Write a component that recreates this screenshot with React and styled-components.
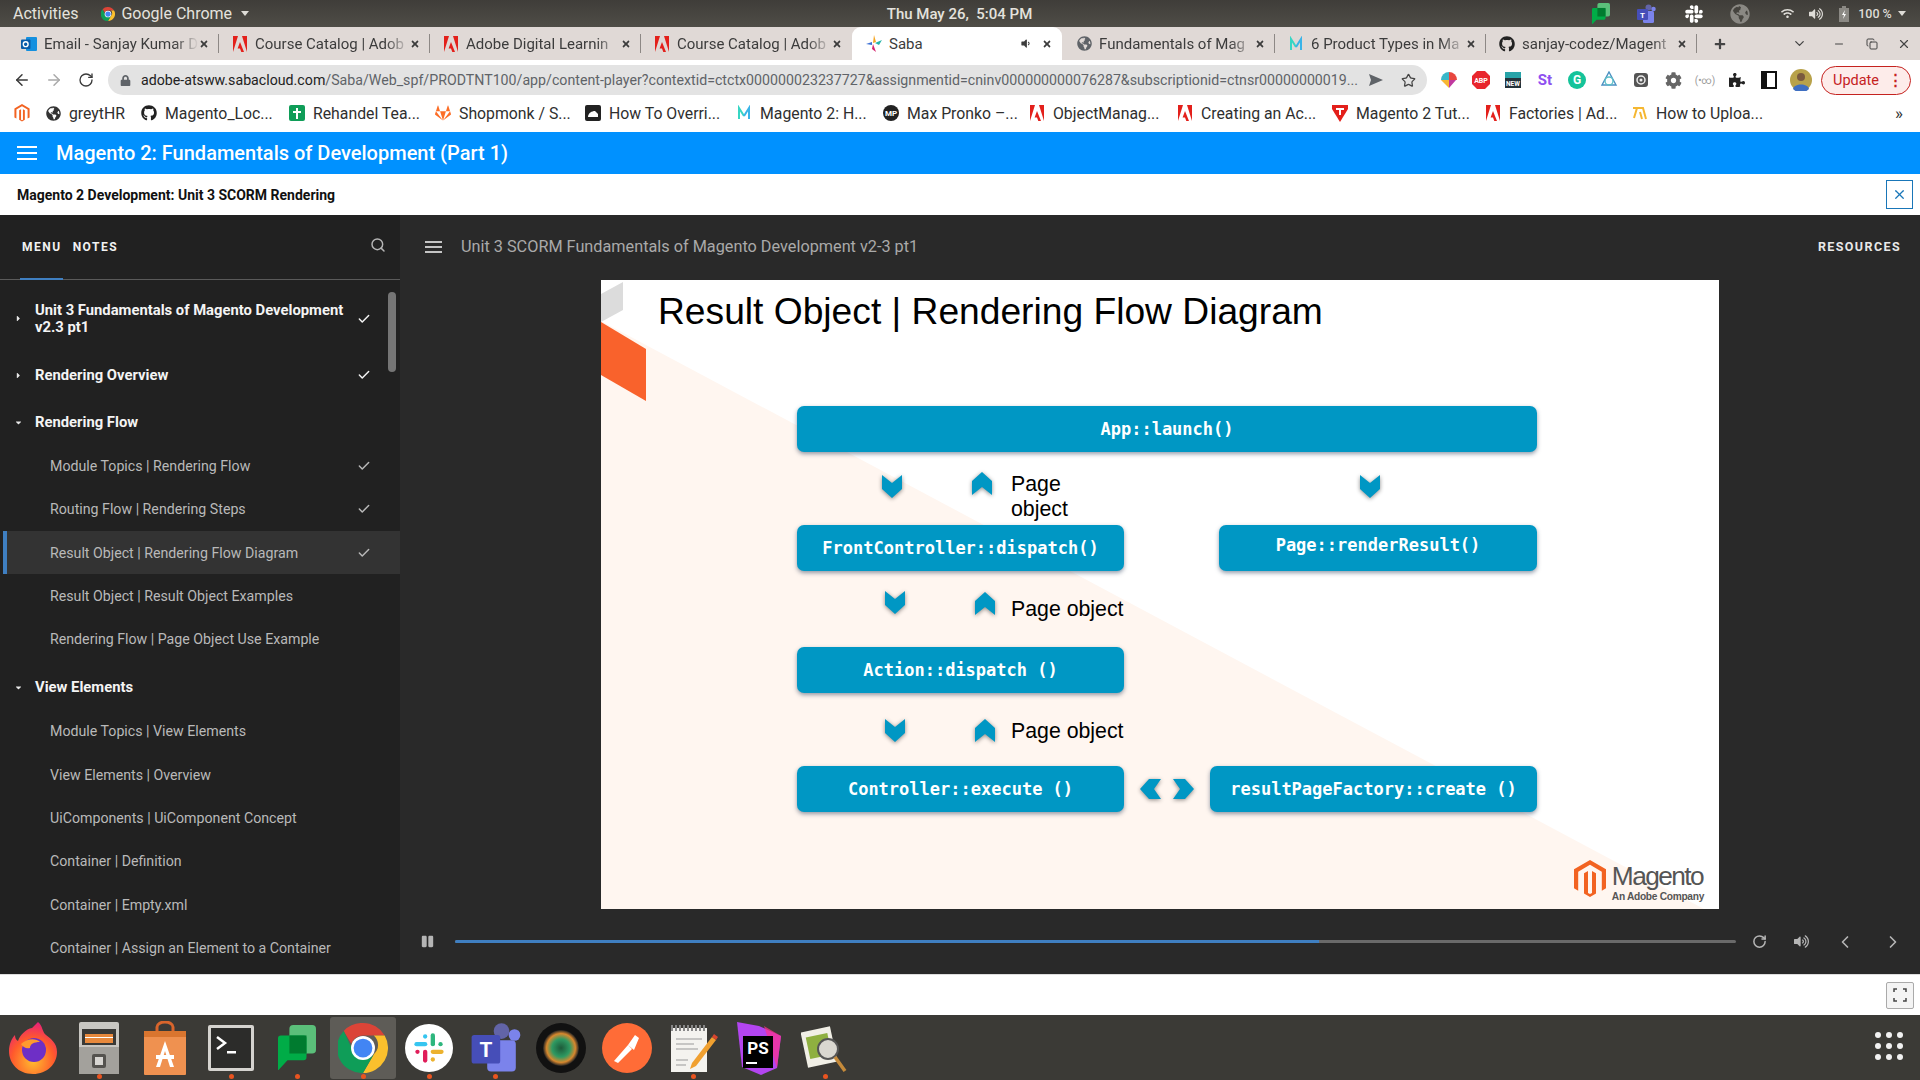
import React from "react";
import styled, { createGlobalStyle } from "styled-components";
import { FaGithub, FaGitlab, FaSlack, FaGlobeAmericas, FaWifi, FaVolumeUp, FaPuzzlePiece, FaPause, FaCog, FaLock, FaCaretRight, FaCaretDown, FaPlus, FaTimes, FaVolumeDown } from "react-icons/fa";
import { ArrowLeft, ArrowRight, RotateCw, Star, Search, Check, ChevronLeft, ChevronRight, ChevronDown, Minus, Copy, X } from "lucide-react";

const Global = createGlobalStyle`
    * { box-sizing: border-box; }
    html, body { margin: 0; padding: 0; background: #fff; }
    body { font-family: Roboto, "Noto Sans", sans-serif; }
    #root { width: 1920px; height: 1080px; overflow: hidden; }
`

const Screen = styled.div`
    width: 1920px;
    height: 1080px;
    display: flex;
    flex-direction: column;
    overflow: hidden;
`

/* ubuntu top bar */
const TopBar = styled.div`
    height: 27px;
    flex: none;
    display: grid;
    grid-template-columns: 1fr auto 1fr;
    align-items: center;
    padding: 0 14px 0 13px;
    background: linear-gradient(#3f3d39, #4f4d47);
    color: #e4e2dd;
    font-size: 15px;
    font-weight: 500;
`
const TopLeft = styled.div`
    display: flex;
    align-items: center;
    gap: 6px;
    font-size: 16px;
    font-weight: 400;
    span:first-child { margin-right: 17px; }
`
const TopRight = styled.div`
    display: flex;
    align-items: center;
    justify-content: flex-end;
    font-size: 12.5px;
`
const TraySlot = styled.div`
    width: ${p => p.$w || 30}px;
    margin-left: ${p => p.$ml || 0}px;
    flex: none;
    display: flex;
    justify-content: center;
    align-items: center;
    color: #dedcd7;
`
const Caret = styled.i`
    display: inline-block;
    width: 0;
    height: 0;
    margin-left: 3px;
    border-left: 4px solid transparent;
    border-right: 4px solid transparent;
    border-top: 5px solid #dedcd7;
`

/* chrome tabs */
const TabStrip = styled.div`
    height: 33px;
    flex: none;
    display: flex;
    align-items: flex-end;
    padding-left: 8px;
    background: #e0d9d6;
    color: #3c3c3c;
`
const Tab = styled.div`
    width: ${p => p.$w || 211}px;
    height: 33px;
    flex: none;
    display: flex;
    align-items: center;
    padding: 0 10px 0 13px;
    font-size: 15px;
    background: ${p => p.$active ? "#fff" : "transparent"};
    border-radius: ${p => p.$active ? "9px 9px 0 0" : "0"};
    position: relative;
    &::after {
        content: "";
        display: ${p => p.$sep ? "block" : "none"};
        position: absolute;
        right: 0;
        top: 7px;
        height: 19px;
        width: 1px;
        background: #8d8885;
    }
`
const TabTitle = styled.div`
    flex: 1;
    min-width: 0;
    margin-left: 7px;
    white-space: nowrap;
    mask-image: ${p => p.$active ? "none" : "linear-gradient(to right, #000 84%, transparent 100%)"};
`
const StripTools = styled.div`
    display: flex;
    align-items: center;
    height: 33px;
    color: #444;
`
const StripSlot = styled.div`
    width: ${p => p.$w}px;
    display: flex;
    justify-content: center;
    align-items: center;
`

/* chrome toolbar */
const ToolBar = styled.div`
    height: 40px;
    flex: none;
    display: flex;
    align-items: center;
    background: #fff;
    padding-left: 6px;
`
const NavBtn = styled.div`
    width: 32px;
    display: flex;
    justify-content: center;
    color: ${p => p.$off ? "#a9a9a9" : "#3a3a3a"};
`
const Address = styled.div`
    width: 1319px;
    height: 30px;
    margin-left: 6px;
    flex: none;
    display: flex;
    align-items: center;
    padding: 0 11px 0 12px;
    border-radius: 15px;
    background: #e3e3e3;
    color: #5f6368;
    font-size: 14.2px;
`
const Url = styled.div`
    flex: 1;
    min-width: 0;
    margin-left: 10px;
    white-space: nowrap;
    overflow: hidden;
    b { font-weight: 400; color: #222; }
`
const ExtList = styled.div`
    display: flex;
    align-items: center;
    margin-left: 6px;
`
const ExtSlot = styled.div`
    width: 32px;
    display: flex;
    justify-content: center;
    align-items: center;
`
const UpdatePill = styled.div`
    width: 90px;
    height: 29px;
    margin-left: 4px;
    display: flex;
    align-items: center;
    justify-content: space-between;
    padding: 0 7px 0 11px;
    border: 1px solid #c5221f;
    border-radius: 15px;
    background: #fdecea;
    color: #c5221f;
    font-size: 14.5px;
`

/* bookmarks */
const BookmarkBar = styled.div`
    height: 32px;
    flex: none;
    display: flex;
    align-items: center;
    padding: 0 0 6px 14px;
    background: #fff;
    color: #2f2f2f;
    font-size: 15.8px;
`
const Bookmark = styled.div`
    width: ${p => p.$w}px;
    flex: none;
    display: flex;
    align-items: center;
    gap: 8px;
    white-space: nowrap;
`
const More = styled.div`
    margin-left: auto;
    margin-right: 17px;
    font-size: 17px;
`

/* course header */
const BlueBar = styled.div`
    height: 42px;
    flex: none;
    display: flex;
    align-items: center;
    gap: 19px;
    padding-left: 17px;
    background: #0091ff;
    color: #fff;
    font-size: 20px;
    font-weight: 500;
`
const Burger = styled.div`
    display: flex;
    flex-direction: column;
    gap: ${p => p.$gap || 4}px;
    width: ${p => p.$w || 20}px;
    i {
        display: block;
        height: 2px;
        background: ${p => p.$c || "#fff"};
    }
`
const SubBar = styled.div`
    height: 41px;
    flex: none;
    display: flex;
    align-items: center;
    justify-content: space-between;
    padding: 0 7px 0 17px;
    background: #fff;
    color: #111;
    font-size: 14px;
    font-weight: 700;
`
const CloseBox = styled.div`
    width: 27px;
    height: 29px;
    display: flex;
    align-items: center;
    justify-content: center;
    border: 1px solid #1976b8;
    color: #1976b8;
`

/* player */
const Player = styled.div`
    height: 759px;
    flex: none;
    display: flex;
`
const Sidebar = styled.aside`
    width: 400px;
    flex: none;
    background: #212121;
    position: relative;
    overflow: hidden;
`
const SideHead = styled.div`
    height: 65px;
    display: flex;
    align-items: center;
    padding: 0 14px 1px 22px;
    border-bottom: 1px solid #5a5a5a;
    position: relative;
`
const SideTab = styled.div`
    margin-right: 11px;
    color: #f2f2f2;
    font-size: 12px;
    font-weight: 700;
    letter-spacing: 1.5px;
`
const TabLine = styled.div`
    position: absolute;
    left: 20px;
    bottom: -1px;
    width: 43px;
    height: 2px;
    background: #3f7fc1;
`
const SideSearch = styled.div`
    margin-left: auto;
    margin-bottom: 3px;
    color: #b5b5b5;
    display: flex;
`
const Thumb = styled.div`
    position: absolute;
    left: 388px;
    top: 77px;
    width: 8px;
    height: 80px;
    border-radius: 4px;
    background: #757575;
`
const TreeList = styled.div`
    padding-top: 17px;
`
const Section = styled.div`
    min-height: 43.4px;
    margin-top: ${p => p.$mt || 0}px;
    display: flex;
    align-items: center;
    padding-right: 29px;
    color: #f4f4f4;
    font-size: 14.8px;
    font-weight: 700;
    line-height: 17px;
`
const Twist = styled.div`
    width: 35px;
    padding-left: 14px;
    flex: none;
    display: flex;
    color: #e8e8e8;
`
const SectionName = styled.div`
    flex: 1;
    padding-right: 12px;
`
const Topic = styled.div`
    height: 43.4px;
    margin-left: 3px;
    display: flex;
    align-items: center;
    padding-right: 29px;
    padding-left: ${p => p.$active ? "43px" : "47px"};
    color: #b9b9b9;
    font-size: 14.2px;
    background: ${p => p.$active ? "#333333" : "transparent"};
    border-left: ${p => p.$active ? "4px solid #3f7fc1" : "0"};
`
const TopicName = styled.div`
    flex: 1;
`
const Stage = styled.main`
    flex: 1;
    min-width: 0;
    background: #292929;
    display: flex;
    flex-direction: column;
`
const StageHead = styled.div`
    height: 65px;
    flex: none;
    display: flex;
    align-items: center;
    gap: 19px;
    padding: 0 19px 2px 25px;
    color: #aaaaaa;
    font-size: 16.25px;
`
const Resources = styled.div`
    margin-left: auto;
    color: #e8e8e8;
    font-size: 12.5px;
    font-weight: 700;
    letter-spacing: 1.4px;
`
const Controls = styled.div`
    height: 65px;
    flex: none;
    display: flex;
    align-items: center;
    padding: 0 0 0 21px;
    color: #b5b5b5;
`
const Track = styled.div`
    width: 1281px;
    height: 3px;
    margin-left: 21px;
    border-radius: 2px;
    background: #6a6a6a;
    overflow: hidden;
`
const TrackFill = styled.div`
    height: 100%;
    background: #3f7fc1;
`
const CtlSlot = styled.div`
    width: ${p => p.$w}px;
    display: flex;
    justify-content: center;
`

/* the slide */
const Slide = styled.div`
    width: 1118px;
    height: 629px;
    margin-left: 201px;
    flex: none;
    background: #fff;
    position: relative;
    overflow: hidden;
`
const Peach = styled.div`
    position: absolute;
    inset: 0;
    background: #fff6f0;
    clip-path: polygon(0 41px, 1103px 629px, 0 629px);
`
const Corner = styled.svg`
    position: absolute;
    left: 0;
    top: 0;
`
const SlideBody = styled.div`
    position: relative;
    padding: 0 0 0 46px;
`
const SlideTitle = styled.h1`
    height: 126px;
    margin: 0;
    padding: 7px 0 0 11px;
    color: #000;
    font-family: "Liberation Sans", Arial, sans-serif;
    font-size: 37.2px;
    font-weight: 400;
    line-height: 48px;
`
const Diagram = styled.div`
    width: 740px;
    margin-left: 150px;
    display: flex;
    flex-direction: column;
`
const BoxRow = styled.div`
    display: flex;
    justify-content: space-between;
    align-items: center;
`
const FlowBox = styled.div`
    width: ${p => p.$w}px;
    height: 46px;
    display: flex;
    align-items: ${p => p.$high ? "flex-start" : "center"};
    padding-top: ${p => p.$high ? "10px" : "0"};
    justify-content: center;
    border-radius: 7px;
    background: #0097c4;
    box-shadow: 0 2px 4px rgba(40, 60, 90, 0.5);
    color: #fff;
    font-family: "DejaVu Sans Mono", "Liberation Mono", monospace;
    font-size: 17px;
    font-weight: 700;
    white-space: pre;
`
const ArrowRow = styled.div`
    height: ${p => p.$h}px;
    position: relative;
`
const Chevron = styled.svg`
    position: absolute;
    left: ${p => p.$x}px;
    top: ${p => p.$y}px;
    filter: drop-shadow(0 1px 2px rgba(0, 0, 0, 0.45));
`
const PageNote = styled.div`
    position: absolute;
    left: 214px;
    top: ${p => p.$y}px;
    color: #000;
    font-family: "Liberation Sans", Arial, sans-serif;
    font-size: 21.3px;
    line-height: 25px;
    white-space: nowrap;
`
const SwapArrows = styled.div`
    display: flex;
    gap: 12px;
    svg { filter: drop-shadow(0 1px 2px rgba(0, 0, 0, 0.45)); }
`
const BrandLogo = styled.div`
    position: absolute;
    right: 15px;
    bottom: 5px;
    display: flex;
    align-items: flex-start;
    gap: 6px;
`
const BrandText = styled.div`
    display: flex;
    flex-direction: column;
    font-family: "Liberation Sans", Arial, sans-serif;
    color: #555;
    strong {
        padding-top: 2px;
        font-size: 26.3px;
        font-weight: 400;
        letter-spacing: -1.6px;
        line-height: 28px;
    }
    small {
        font-size: 10.2px;
        font-weight: 700;
        line-height: 14px;
        letter-spacing: -0.3px;
    }
`

/* strip under the player */
const FootBar = styled.div`
    height: 41px;
    flex: none;
    display: flex;
    align-items: center;
    justify-content: flex-end;
    padding-right: 6px;
    border-top: 1px solid #ddd;
    background: #fff;
`
const FullBtn = styled.div`
    width: 28px;
    height: 27px;
    display: flex;
    align-items: center;
    justify-content: center;
    border: 1px solid #aaa;
    border-radius: 2px;
    background: #f4f4f4;
    color: #444;
`

/* ubuntu dock */
const Dock = styled.div`
    height: 65px;
    flex: none;
    display: flex;
    align-items: center;
    background: #3b3a36;
    position: relative;
`
const DockItem = styled.div`
    width: 66px;
    height: 62px;
    flex: none;
    display: flex;
    align-items: center;
    justify-content: center;
    border-radius: 3px;
    background: ${p => p.$active ? "#5e5c57" : "transparent"};
    position: relative;
    &::after {
        content: "";
        display: ${p => p.$dot ? "block" : "none"};
        position: absolute;
        bottom: 0;
        left: 31px;
        width: 5px;
        height: 5px;
        border-radius: 50%;
        background: #e95420;
    }
`
const AppGrid = styled.div`
    position: absolute;
    right: 17px;
    top: 17px;
    display: grid;
    grid-template-columns: repeat(3, 6px);
    gap: 5px;
    i {
        width: 6px;
        height: 6px;
        border-radius: 50%;
        background: #f2f2f2;
    }
`

/* small drawn favicons */
const Adobe = () => (
    <svg width="16" height="16" viewBox="0 0 16 16">
        <path d="M1 0h5L1 16zM10 0h5v16zM8 6l4 10H9.3L8 12.6H5.6z" fill="#e3201b" />
    </svg>
)
const Outlook = () => (
    <svg width="16" height="16" viewBox="0 0 16 16">
        <rect x="5" y="1" width="11" height="14" rx="1" fill="#1490df" />
        <rect x="0" y="3.500" width="9.500" height="9.500" rx="1" fill="#0a5ca8" />
        <circle cx="4.700" cy="8.200" r="2.400" fill="none" stroke="#fff" strokeWidth="1.400" />
    </svg>
)
const Saba = () => (
    <svg width="17" height="17" viewBox="0 0 17 17">
        <path d="M9 0l2 7-3 1z" fill="#f5a623" />
        <path d="M10 8l7-3-3 5z" fill="#28b5a8" />
        <path d="M8 9l3 8-4-3z" fill="#d6246e" />
        <path d="M1 9l6-2v3z" fill="#3b6fd4" />
    </svg>
)
const CyanM = () => (
    <svg width="16" height="16" viewBox="0 0 16 16" fill="none" strokeWidth="2">
        <path d="M3 14V3l5 8" stroke="#37d6c4" />
        <path d="M13 14V3L8 11" stroke="#3ab4e8" />
    </svg>
)
const MagentoMark = ({ w = 16, h = 18, c = "#f26322" }) => (
    <svg width={w} height={h} viewBox="0 0 32 38">
        <path d="M16 0l16 9.300v19l-4.200 2.400v-19L16 4.800 4.200 11.700v19L0 28.300v-19z" fill={c} />
        <path d="M14 11v22l2 1.100 2-1.100V11l4 2.300v20.200L16 37l-6-3.500V13.300z" fill={c} />
    </svg>
)
const Tile = ({ bg, r = 2, children }) => (
    <svg width="16" height="16" viewBox="0 0 16 16">
        <rect width="16" height="16" rx={r} fill={bg} />
        {children}
    </svg>
)
const Shield = () => (
    <svg width="16" height="17" viewBox="0 0 16 17">
        <path d="M0 0h16v4l-8 13L0 4z" fill="#e3201b" />
        <path d="M4 3h8v2H9v5H7V5H4z" fill="#fff" />
    </svg>
)
const Upload = () => (
    <svg width="16" height="16" viewBox="0 0 16 16" fill="none" stroke="#f5b731" strokeWidth="2">
        <path d="M1 3h10l3 11M5 3l-3 10M8 7l2 7" />
    </svg>
)
const ChromeLogo = ({ size = 14 }) => (
    <svg width={size} height={size} viewBox="0 0 48 48">
        <path d="M24 0a24 24 0 0 1 20.800 12H24a12 12 0 0 0-11.300 8L5.500 7.600A24 24 0 0 1 24 0z" fill="#db4437" />
        <path d="M44.800 12A24 24 0 0 1 24 48l10.400-18a12 12 0 0 0 0-18z" fill="#fbc02d" />
        <path d="M24 48A24 24 0 0 1 5.500 7.600L15.800 30A12 12 0 0 0 34.400 30L24 48z" fill="#0f9d58" />
        <circle cx="24" cy="24" r="11.500" fill="#fff" />
        <circle cx="24" cy="24" r="9" fill="#4285f4" />
    </svg>
)
const ChatMark = ({ size = 22 }) => (
    <svg width={size} height={size * 1.2} viewBox="0 0 40 48">
        <rect x="12" y="0" width="28" height="30" rx="4" fill="#5bbf7a" />
        <path d="M0 14a3 3 0 0 1 3-3h24a3 3 0 0 1 3 3v20a3 3 0 0 1-3 3H10L0 48z" fill="#00ac47" />
        <rect x="12" y="11" width="18" height="19" fill="#007b2f" />
    </svg>
)
const TeamsMark = ({ size = 22 }) => (
    <svg width={size} height={size} viewBox="0 0 40 40">
        <circle cx="25" cy="7" r="6" fill="#6264a7" />
        <circle cx="35" cy="10" r="4.500" fill="#7b83eb" />
        <rect x="14" y="14" width="22" height="24" rx="3" fill="#7b83eb" />
        <rect x="2" y="10" width="22" height="22" rx="2" fill="#464eb8" />
        <text x="13" y="27" textAnchor="middle" fontFamily="Roboto" fontWeight="700" fontSize="16" fill="#fff">T</text>
    </svg>
)

const ExtIcons = [
    <svg key="a" width="18" height="18" viewBox="0 0 18 18"><path d="M9 1a8 8 0 0 1 8 8H9z" fill="#e8473f" /><path d="M1 9a8 8 0 0 1 8-8v8z" fill="#39b7c9" /><path d="M1 9h8v8z" fill="#f7b733" /><path d="M9 9h7l-7 8z" fill="#c0399f" /></svg>,
    <svg key="b" width="18" height="18" viewBox="0 0 18 18"><path d="M5 0h8l5 5v8l-5 5H5l-5-5V5z" fill="#e8262d" /><text x="9" y="12" textAnchor="middle" fontSize="7" fontWeight="700" fontFamily="Roboto" fill="#fff">ABP</text></svg>,
    <svg key="c" width="18" height="18" viewBox="0 0 18 18"><rect x="1" y="1" width="16" height="16" fill="#24323a" /><rect x="1" y="1" width="16" height="6" fill="#27a3a8" /><text x="9" y="15" textAnchor="middle" fontSize="6.500" fontWeight="700" fontFamily="Roboto" fill="#fff">NEW</text></svg>,
    <span key="d" style={{ color: "#8e4ff0", fontWeight: 700, fontSize: 15 }}>St</span>,
    <svg key="e" width="18" height="18" viewBox="0 0 18 18"><circle cx="9" cy="9" r="9" fill="#15c39a" /><text x="9" y="13" textAnchor="middle" fontSize="12" fontWeight="700" fontFamily="Roboto" fill="#fff">G</text></svg>,
    <svg key="f" width="18" height="18" viewBox="0 0 18 18" fill="none" stroke="#4a90c2" strokeWidth="1.400"><path d="M9 1l7 13H2z" /><circle cx="9" cy="10" r="4" stroke="#5cc0c7" /></svg>,
    <svg key="g" width="16" height="16" viewBox="0 0 16 16"><rect x="1" y="1" width="14" height="14" rx="3" fill="#555" /><circle cx="8" cy="8" r="4" fill="none" stroke="#eee" strokeWidth="1.500" /><circle cx="8" cy="8" r="1.500" fill="#eee" /></svg>,
    <FaCog key="h" size={17} color="#666" />,
    <span key="i" style={{ color: "#9a9a9a", fontSize: 10 }}>(•∞)</span>,
    <FaPuzzlePiece key="j" size={16} color="#222" />,
    <svg key="k" width="16" height="18" viewBox="0 0 16 18"><rect x="1" y="1" width="14" height="16" fill="#fff" stroke="#111" strokeWidth="2" /><rect x="1" y="1" width="5" height="16" fill="#111" /></svg>,
    <svg key="l" width="22" height="22" viewBox="0 0 22 22"><circle cx="11" cy="11" r="11" fill="#b8a24a" /><circle cx="11" cy="8" r="4" fill="#7a5a3e" /><path d="M3 20c1-6 15-6 16 0a11 11 0 0 1-16 0z" fill="#3e6fc2" /></svg>,
]

const tabs = [
    { icon: <Outlook />, title: "Email - Sanjay Kumar D", sep: true },
    { icon: <Adobe />, title: "Course Catalog | Adob", sep: true },
    { icon: <Adobe />, title: "Adobe Digital Learnin", sep: true },
    { icon: <Adobe />, title: "Course Catalog | Adob" },
]
const tabsAfter = [
    { icon: <FaGlobeAmericas size={15} color="#5f6368" />, title: "Fundamentals of Mag", sep: true },
    { icon: <CyanM />, title: "6 Product Types in Ma", sep: true },
    { icon: <FaGithub size={16} color="#222" />, title: "sanjay-codez/Magent", sep: true },
]

const bookmarks = [
    { w: 32, icon: <MagentoMark /> },
    { w: 95, icon: <FaGlobeAmericas size={15} color="#333" />, text: "greytHR" },
    { w: 148, icon: <FaGithub size={16} color="#222" />, text: "Magento_Loc..." },
    { w: 146, icon: <Tile bg="#0f9d58"><path d="M7 3h2v3h3v2H9v6H7V8H4V6h3z" fill="#fff" /></Tile>, text: "Rehandel Tea..." },
    { w: 150, icon: <FaGitlab size={16} color="#fc6d26" />, text: "Shopmonk / S..." },
    { w: 151, icon: <Tile bg="#222"><path d="M3 12c0-4 4-6 7-6l3 3v3z" fill="#fff" /></Tile>, text: "How To Overri..." },
    { w: 147, icon: <CyanM />, text: "Magento 2: H..." },
    { w: 146, icon: <Tile bg="#222" r={8}><text x="8" y="11" textAnchor="middle" fontSize="8" fontWeight="700" fontFamily="Roboto" fill="#fff">MP</text></Tile>, text: "Max Pronko –..." },
    { w: 148, icon: <Adobe />, text: "ObjectManag..." },
    { w: 155, icon: <Adobe />, text: "Creating an Ac..." },
    { w: 153, icon: <Shield />, text: "Magento 2 Tut..." },
    { w: 147, icon: <Adobe />, text: "Factories | Ad..." },
    { w: 150, icon: <Upload />, text: "How to Uploa..." },
]

const tree = [
    { kind: "section", name: "Unit 3 Fundamentals of Magento Development v2.3 pt1", done: true },
    { kind: "section", name: "Rendering Overview", done: true, mt: 13 },
    { kind: "section", name: "Rendering Flow", open: true, mt: 4 },
    { name: "Module Topics | Rendering Flow", done: true },
    { name: "Routing Flow | Rendering Steps", done: true },
    { name: "Result Object | Rendering Flow Diagram", done: true, active: true },
    { name: "Result Object | Result Object Examples" },
    { name: "Rendering Flow | Page Object Use Example" },
    { kind: "section", name: "View Elements", open: true, mt: 5 },
    { name: "Module Topics | View Elements" },
    { name: "View Elements | Overview" },
    { name: "UiComponents | UiComponent Concept" },
    { name: "Container | Definition" },
    { name: "Container | Empty.xml" },
    { name: "Container | Assign an Element to a Container" },
]

const ChevDown = ({ x, y }) => (
    <Chevron $x={x} $y={y} width="20" height="23" viewBox="0 0 20 23">
        <path d="M0 0l10 8 10-8v14l-10 9-10-9z" fill="#0097c4" />
    </Chevron>
)
const ChevUp = ({ x, y }) => (
    <Chevron $x={x} $y={y} width="20" height="23" viewBox="0 0 20 23">
        <path d="M10 0l10 9v14l-10-8-10 8V9z" fill="#0097c4" />
    </Chevron>
)

const dockIcons = [
    { icon: <svg width="54" height="54" viewBox="0 0 54 54"><defs><radialGradient id="fx" cx="0.5" cy="0.75" r="0.8"><stop offset="0" stopColor="#ffbd2e" /><stop offset="0.55" stopColor="#ff5a2c" /><stop offset="1" stopColor="#e31587" /></radialGradient></defs><path d="M27 53C12 53 3 42 3 30c0-7 3-13 6-16 0 3 1 5 3 6 2-6 8-12 14-13l6-6c5 4 4 10 8 13 5 4 11 8 11 17 0 12-10 22-24 22z" fill="url(#fx)" /><circle cx="28" cy="29" r="12" fill="#6e2fc6" /><path d="M15 23c6-6 15-6 19-2-6 0-10 2-10 6-4 1-7-1-9-4z" fill="#ff9a2e" /></svg> },
    { dot: true, icon: <svg width="42" height="54" viewBox="0 0 42 54"><rect x="1" y="1" width="40" height="52" rx="2" fill="#c9c7c2" /><rect x="4" y="8" width="34" height="16" fill="#3a3936" /><rect x="7" y="13" width="28" height="9" fill="#e8893c" /><rect x="7" y="16" width="28" height="1" fill="#fff" /><rect x="1" y="26" width="40" height="27" fill="#a3a19c" /><rect x="14" y="33" width="14" height="14" rx="2" fill="#55534f" /><rect x="17" y="36" width="8" height="8" fill="#d8d6d2" /></svg> },
    { icon: <svg width="44" height="54" viewBox="0 0 44 54"><path d="M14 10V6a8 5 0 0 1 16 0v4" fill="none" stroke="#d9652c" strokeWidth="3" /><rect x="1" y="10" width="42" height="44" rx="1" fill="#ef9150" /><rect x="1" y="10" width="42" height="6" fill="#d9752f" /><path d="M22 20l9 26h-4l-5-16-5 16h-4z" fill="#fff" /><rect x="13" y="34" width="18" height="4" fill="#fff" /></svg> },
    { dot: true, icon: <svg width="48" height="48" viewBox="0 0 48 48"><rect x="1" y="1" width="46" height="46" rx="2" fill="#d5d3cf" /><rect x="4" y="4" width="40" height="40" fill="#2c2c2a" /><path d="M10 13l8 6-8 6" fill="none" stroke="#fff" strokeWidth="2.500" /><rect x="20" y="27" width="9" height="2.500" fill="#fff" /></svg> },
    { dot: true, icon: <ChatMark size={38} /> },
    { dot: true, active: true, icon: <ChromeLogo size={50} /> },
    { dot: true, icon: <svg width="48" height="50" viewBox="0 0 50 50"><circle cx="25" cy="25" r="25" fill="#fff" /><g strokeWidth="4.500" strokeLinecap="round"><path d="M21 13v0" stroke="#36c5f0" /><path d="M12 21h9" stroke="#36c5f0" /><path d="M29 12v9" stroke="#2eb67d" /><path d="M37 21h0" stroke="#2eb67d" /><path d="M29 29h9" stroke="#ecb22e" /><path d="M29 37v0" stroke="#ecb22e" /><path d="M21 29v9" stroke="#e01e5a" /><path d="M13 29h0" stroke="#e01e5a" /></g></svg> },
    { dot: true, icon: <TeamsMark size={52} /> },
    { icon: <svg width="50" height="50" viewBox="0 0 50 50"><defs><radialGradient id="lens" cx="0.5" cy="0.5" r="0.5"><stop offset="0" stopColor="#1d5a3a" /><stop offset="0.5" stopColor="#2f9a62" /><stop offset="0.8" stopColor="#d8882e" /><stop offset="1" stopColor="#222" /></radialGradient></defs><circle cx="25" cy="25" r="25" fill="#111" /><circle cx="25" cy="25" r="18" fill="url(#lens)" /></svg> },
    { icon: <svg width="50" height="50" viewBox="0 0 50 50"><circle cx="25" cy="25" r="25" fill="#ff6c37" /><path d="M12 38l14-16 4 4-14 14zM26 22l7-10 4 3-5 12z" fill="#fff" /></svg> },
    { dot: true, icon: <svg width="50" height="50" viewBox="0 0 50 50"><rect x="3" y="5" width="36" height="44" fill="#f4f3ef" /><path d="M3 5h36" stroke="#888" strokeWidth="6" strokeDasharray="2 2" /><path d="M8 16h26M8 21h18M8 26h22M8 37h12M8 42h10" stroke="#999" strokeWidth="1" /><path d="M24 40l20-26 4 3-20 26-6 3z" fill="#f0a030" /><path d="M44 14l2-3 4 3-2 3z" fill="#d8452f" /></svg> },
    { icon: <svg width="50" height="54" viewBox="0 0 50 54"><path d="M3 1l22 4 22 10-4 32-16 7-19-8z" fill="#b345f1" /><path d="M30 5l17 10-4 32z" fill="#ff318c" opacity="0.7" /><rect x="9" y="15" width="30" height="32" fill="#000" /><text x="24" y="33" textAnchor="middle" fontFamily="Roboto" fontWeight="700" fontSize="17" fill="#fff">PS</text><rect x="12" y="41" width="11" height="2" fill="#fff" /></svg> },
    { dot: true, icon: <svg width="48" height="54" viewBox="0 0 48 54"><rect x="3" y="8" width="30" height="36" fill="#f1efe6" transform="rotate(-12 18 26)" /><rect x="7" y="14" width="22" height="22" fill="#8fb040" transform="rotate(-12 18 26)" /><circle cx="27" cy="28" r="10" fill="#d9d7d0" stroke="#555" strokeWidth="2" /><path d="M34 36l10 14" stroke="#c58a3a" strokeWidth="3.500" /></svg> },
]

export default function App() {
    return (
        <Screen>
            <Global />
            <TopBar>
                <TopLeft>
                    <span>Activities</span>
                    <ChromeLogo />
                    <span>Google Chrome</span>
                    <Caret />
                </TopLeft>
                <div>Thu May 26,&nbsp; 5:04 PM</div>
                <TopRight>
                    <TraySlot><ChatMark size={18} /></TraySlot>
                    <TraySlot $ml={15}><TeamsMark size={20} /></TraySlot>
                    <TraySlot $ml={18}><FaSlack size={20} color="#fff" /></TraySlot>
                    <TraySlot $ml={16}><FaGlobeAmericas size={20} color="#8a8883" /></TraySlot>
                    <TraySlot $ml={17}><FaWifi size={13} /></TraySlot>
                    <TraySlot $ml={-1}><FaVolumeUp size={14} /></TraySlot>
                    <TraySlot $ml={-2}><svg width="10" height="16" viewBox="0 0 10 16"><path d="M3 0h4v2h3v14H0V2h3z" fill="#8b8984" /><path d="M6 4L3 9h2l-1 4 3-5H5z" fill="#fff" /></svg></TraySlot>
                    <TraySlot $w={40} $ml={-4}>100 %</TraySlot>
                    <Caret />
                </TopRight>
            </TopBar>

            <TabStrip>
                {tabs.map(t => (
                    <Tab key={t.title + t.sep} $sep={t.sep}>
                        {t.icon}
                        <TabTitle>{t.title}</TabTitle>
                        <FaTimes size={10} />
                    </Tab>
                ))}
                <Tab $active $w={210}>
                    <Saba />
                    <TabTitle $active>Saba</TabTitle>
                    <FaVolumeDown size={11} />
                    <span style={{ width: 11 }} />
                    <FaTimes size={10} />
                </Tab>
                <span style={{ width: 2 }} />
                {tabsAfter.map(t => (
                    <Tab key={t.title} $sep={t.sep}>
                        {t.icon}
                        <TabTitle>{t.title}</TabTitle>
                        <FaTimes size={10} />
                    </Tab>
                ))}
                <StripTools>
                    <StripSlot $w={46}><FaPlus size={12} /></StripSlot>
                    <StripSlot $w={34} />
                    <StripSlot $w={45}><ChevronDown size={15} /></StripSlot>
                    <StripSlot $w={34}><Minus size={12} /></StripSlot>
                    <StripSlot $w={32}><Copy size={12} /></StripSlot>
                    <StripSlot $w={32}><X size={14} /></StripSlot>
                </StripTools>
            </TabStrip>

            <ToolBar>
                <NavBtn><ArrowLeft size={18} /></NavBtn>
                <NavBtn $off><ArrowRight size={18} /></NavBtn>
                <NavBtn><RotateCw size={16} /></NavBtn>
                <Address>
                    <FaLock size={11} color="#5f6368" />
                    <Url><b>adobe-atsww.sabacloud.com</b>/Saba/Web_spf/PRODTNT100/app/content-player?contextid=ctctx000000023237727&amp;assignmentid=cninv000000000076287&amp;subscriptionid=ctnsr00000000019...</Url>
                    <svg width="14" height="14" viewBox="0 0 14 14" style={{ marginLeft: 11 }}><path d="M0 1l14 6L0 13l2-6z" fill="#5f6368" /></svg>
                    <Star size={15} color="#444" style={{ marginLeft: 18 }} />
                </Address>
                <ExtList>
                    {ExtIcons.map(icon => <ExtSlot key={icon.key}>{icon}</ExtSlot>)}
                </ExtList>
                <UpdatePill>
                    Update
                    <span style={{ fontWeight: 700 }}>⋮</span>
                </UpdatePill>
            </ToolBar>

            <BookmarkBar>
                {bookmarks.map((b, i) => (
                    <Bookmark key={i} $w={b.w}>
                        {b.icon}
                        {b.text}
                    </Bookmark>
                ))}
                <More>»</More>
            </BookmarkBar>

            <BlueBar>
                <Burger><i /><i /><i /></Burger>
                Magento 2: Fundamentals of Development (Part 1)
            </BlueBar>
            <SubBar>
                Magento 2 Development: Unit 3 SCORM Rendering
                <CloseBox><X size={15} /></CloseBox>
            </SubBar>

            <Player>
                <Sidebar>
                    <SideHead>
                        <SideTab>MENU</SideTab>
                        <SideTab>NOTES</SideTab>
                        <SideSearch><Search size={16} strokeWidth={2.2} /></SideSearch>
                        <TabLine />
                    </SideHead>
                    <Thumb />
                    <TreeList>
                        {tree.map(row => row.kind === "section" ? (
                            <Section key={row.name} $mt={row.mt}>
                                <Twist>{row.open ? <FaCaretDown size={9} /> : <FaCaretRight size={9} />}</Twist>
                                <SectionName>{row.name}</SectionName>
                                {row.done && <Check size={14} strokeWidth={2.5} />}
                            </Section>
                        ) : (
                            <Topic key={row.name} $active={row.active}>
                                <TopicName>{row.name}</TopicName>
                                {row.done && <Check size={14} strokeWidth={2.5} />}
                            </Topic>
                        ))}
                    </TreeList>
                </Sidebar>

                <Stage>
                    <StageHead>
                        <Burger $w={17} $gap={3} $c="#c4c4c4"><i /><i /><i /></Burger>
                        Unit 3 SCORM Fundamentals of Magento Development v2-3 pt1
                        <Resources>RESOURCES</Resources>
                    </StageHead>

                    <Slide>
                        <Peach />
                        <Corner width="46" height="124" viewBox="0 0 46 124">
                            <path d="M0 14L22 2v28L0 42z" fill="#dcdcdc" />
                            <path d="M0 42l45 27v52L0 95z" fill="#f9622c" />
                        </Corner>
                        <SlideBody>
                            <SlideTitle>Result Object | Rendering Flow Diagram</SlideTitle>
                            <Diagram>
                                <BoxRow><FlowBox $w={740}>App::launch()</FlowBox></BoxRow>
                                <ArrowRow $h={73}>
                                    <ChevDown x={85} y={23} />
                                    <ChevUp x={175} y={20} />
                                    <PageNote $y={20}>Page<br />object</PageNote>
                                    <ChevDown x={563} y={23} />
                                </ArrowRow>
                                <BoxRow>
                                    <FlowBox $w={327}>FrontController::dispatch()</FlowBox>
                                    <FlowBox $w={318} $high>Page::renderResult()</FlowBox>
                                </BoxRow>
                                <ArrowRow $h={76}>
                                    <ChevDown x={88} y={20} />
                                    <ChevUp x={178} y={21} />
                                    <PageNote $y={26}>Page object</PageNote>
                                </ArrowRow>
                                <BoxRow><FlowBox $w={327}>Action::dispatch ()</FlowBox></BoxRow>
                                <ArrowRow $h={73}>
                                    <ChevDown x={88} y={26} />
                                    <ChevUp x={178} y={26} />
                                    <PageNote $y={26}>Page object</PageNote>
                                </ArrowRow>
                                <BoxRow>
                                    <FlowBox $w={327}>Controller::execute ()</FlowBox>
                                    <SwapArrows>
                                        <svg width="21" height="20" viewBox="0 0 21 20"><path d="M21 0l-7 10 7 10H9L0 10 9 0z" fill="#0097c4" /></svg>
                                        <svg width="21" height="20" viewBox="0 0 21 20"><path d="M0 0l7 10-7 10h12l9-10L12 0z" fill="#0097c4" /></svg>
                                    </SwapArrows>
                                    <FlowBox $w={327}>resultPageFactory::create ()</FlowBox>
                                </BoxRow>
                            </Diagram>
                        </SlideBody>
                        <BrandLogo>
                            <MagentoMark w={32} h={38} />
                            <BrandText>
                                <strong>Magento</strong>
                                <small>An Adobe Company</small>
                            </BrandText>
                        </BrandLogo>
                    </Slide>

                    <Controls>
                        <FaPause size={13} />
                        <Track><TrackFill style={{ width: `${(864 / 1281) * 100}%` }} /></Track>
                        <CtlSlot $w={46}><RotateCw size={15} strokeWidth={2.4} /></CtlSlot>
                        <CtlSlot $w={38}><FaVolumeUp size={15} /></CtlSlot>
                        <CtlSlot $w={50}><ChevronLeft size={20} /></CtlSlot>
                        <CtlSlot $w={46}><ChevronRight size={20} /></CtlSlot>
                    </Controls>
                </Stage>
            </Player>

            <FootBar>
                <FullBtn><svg width="14" height="14" viewBox="0 0 14 14" fill="none" stroke="#444" strokeWidth="1.500"><path d="M1 4V1h3M10 1h3v3M13 10v3h-3M4 13H1v-3" /></svg></FullBtn>
            </FootBar>

            <Dock>
                {dockIcons.map((d, i) => (
                    <DockItem key={i} $active={d.active} $dot={d.dot}>{d.icon}</DockItem>
                ))}
                <AppGrid>
                    {Array.from({ length: 9 }).map((_, i) => <i key={i} />)}
                </AppGrid>
            </Dock>
        </Screen>
    );
}
